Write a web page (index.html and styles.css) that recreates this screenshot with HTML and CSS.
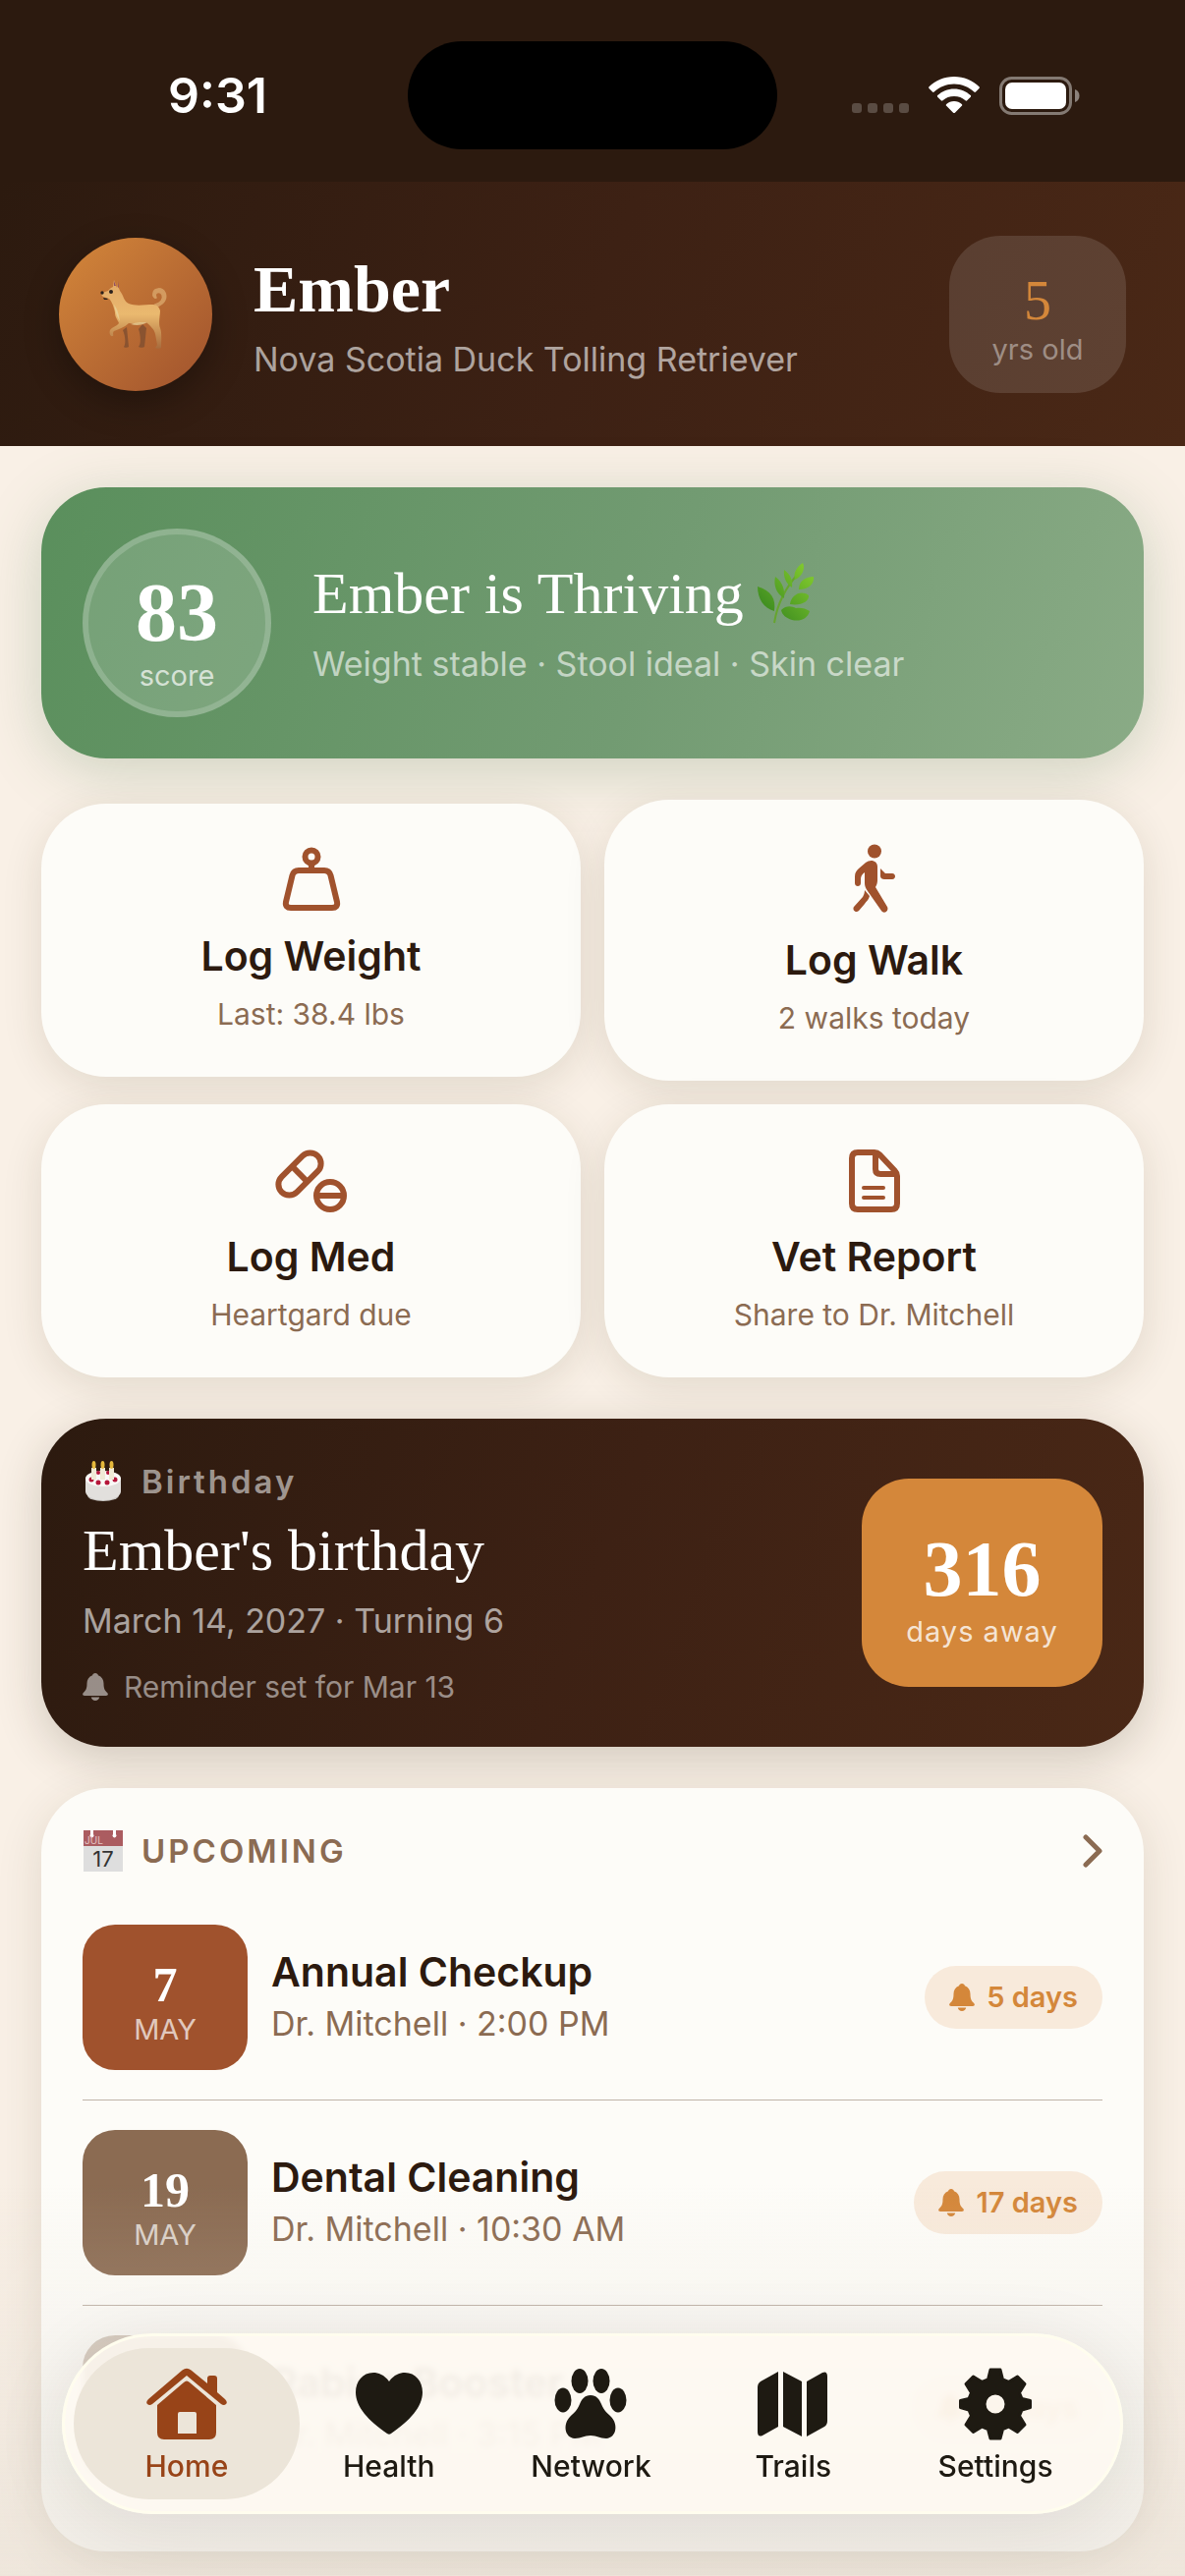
FILE: index.html
```html
<!DOCTYPE html>
<html lang="en">
<head>
<meta charset="utf-8">
<meta name="viewport" content="width=device-width, initial-scale=1">
<title>Ember</title>
<link rel="stylesheet" href="styles.css">
</head>
<body>
<svg class="defs" aria-hidden="true">
  <symbol id="bell" viewBox="0 0 26 28"><path d="M13 0c1.700 0 2.600 1 2.900 2.200 3.700 1.300 5.600 4.500 5.600 8.300 0 5 1 7 3.500 9.300 1.600 1.600.9 3.200-1 3.200H2c-1.900 0-2.600-1.600-1-3.200 2.500-2.300 3.500-4.300 3.500-9.300 0-3.800 1.900-7 5.600-8.300C10.400 1 11.300 0 13 0zM8.800 24.600h8.400c-.5 2-2 3.400-4.200 3.400s-3.700-1.400-4.200-3.400z"/></symbol>
</svg>

<div class="status">
  <time class="status-time">9:31</time>
  <div class="island"></div>
  <div class="status-icons">
    <svg width="58" height="38" viewBox="0 0 58 38" fill="#fff" fill-opacity=".22"><rect y="27" width="10" height="10" rx="3"/><rect x="16" y="27" width="10" height="10" rx="3"/><rect x="32" y="27" width="10" height="10" rx="3"/><rect x="48" y="27" width="10" height="10" rx="3"/></svg>
    <svg class="wifi" width="52" height="38" viewBox="0 0 52 38" fill="#fff"><path d="M26 0C36 0 45 4 51.500 10.300c.5.500.5 1.200 0 1.700l-3.500 3.500c-.5.500-1.200.5-1.700 0C41 10.500 34 7.500 26 7.500S11 10.500 5.700 15.500c-.5.500-1.200.5-1.700 0L.5 12c-.5-.5-.5-1.200 0-1.700C7 4 16 0 26 0z"/><path d="M26 12.500c6.500 0 12.400 2.500 16.800 6.600.5.500.5 1.200 0 1.700l-3.600 3.500c-.5.500-1.200.5-1.700 0C34.500 21.500 30.500 20 26 20s-8.500 1.500-11.500 4.300c-.5.500-1.200.5-1.700 0l-3.600-3.500c-.5-.5-.5-1.200 0-1.700 4.400-4.100 10.300-6.600 16.800-6.600z"/><path d="M26 25c3 0 5.700 1.100 7.800 2.900.6.500.6 1.300 0 1.800l-6.900 7c-.5.500-1.300.5-1.800 0l-6.900-7c-.6-.5-.6-1.300 0-1.800C20.300 26.100 23 25 26 25z"/></svg>
    <svg width="82" height="39" viewBox="0 0 82 39"><rect x="1.500" y="1.500" width="71" height="36" rx="11" fill="none" stroke="#fff" stroke-opacity=".42" stroke-width="3"/><rect x="6" y="6" width="62" height="27" rx="7" fill="#fff"/><path d="M77 13c3 1 4.500 3.500 4.500 6.500S80 25 77 26z" fill="#fff" fill-opacity=".45"/></svg>
  </div>
</div>

<header class="profile">
  <div class="avatar">
    <svg width="72" height="72" viewBox="0 0 72 72">
      <defs><linearGradient id="fur" x1="0" y1="0" x2="0" y2="1"><stop offset="0" stop-color="#e2a968"/><stop offset=".5" stop-color="#eab96f"/><stop offset="1" stop-color="#a86b3c"/></linearGradient></defs>
      <path d="M27 49l2 20c-1 1-5 1-5 0 2-2 2-10-1-17zM43 46l4 4-2 19c-1 1-5 1-6 0 3-3 2-12 0-18z" fill="#8a5330"/>
      <path d="M58 28c8-3 10-9 8-14-3-6-11-5-12 0-1 4 2 6 3 5-3-6 4-7 6-3 2 5-2 8-7 10z" fill="#d39b60" stroke="#d39b60" stroke-width="1.500"/>
      <path d="M17 9L14 1l-1 7c-3 1-4 3-5 4l-6 2c-1 1-1 3 1 4l6 2c3 3 5 9 6 14 0 5 3 8 4 11-2 3-7 4-9 7-1 3 0 7 3 6 1-1-1-3 1-5 5-2 11-4 15-8 6 1 12 0 18-1 4 4 8 7 9 12l2 11c-1 2-2 2-2 3 1 1 5 1 6 0 0-5 1-15-1-20-2-5 0-13 0-18-1-3-3-6-7-6-8 0-18 2-25-1-5-2-5-8-9-13-1-3-2-4-3-5L18 1z" fill="url(#fur)"/>
      <path d="M14 7V2l2 5zM18 8V2l1 7z" fill="#935063"/><path d="M14 26c2 10 4 14 6 17-1-6-2-12-6-17zM31 46c6 2 12 1 17-2-5 0-11 0-17 2z" fill="#ead7a0" opacity=".7"/>
      <ellipse cx="11" cy="13" rx="2" ry="2" fill="#2b211c"/><circle cx="2" cy="14" r="1.700" fill="#2b211c"/><path d="M3 19l5 1-1 1H4z" fill="#2b211c"/>
    </svg>
  </div>
  <div class="profile-text">
    <h1>Ember</h1>
    <p class="detail">Nova Scotia Duck Tolling Retriever</p>
  </div>
  <div class="age"><span class="age-number">5</span><span class="caption">yrs old</span></div>
</header>

<main>
  <section class="hero">
    <div class="score"><span class="big-number">83</span><span class="caption">score</span></div>
    <div class="hero-text">
      <h2>Ember is Thriving
        <svg class="leaf" width="58" height="62" viewBox="0 0 58 62"><defs><linearGradient id="lf" x1="1" y1="0" x2="0" y2="1"><stop offset="0" stop-color="#89d12f"/><stop offset="1" stop-color="#2f7f1d"/></linearGradient></defs><path d="M17 61C20 42 27 26 43 9" fill="none" stroke="#66a52e" stroke-width="2"/><g fill="url(#lf)"><path d="M46 0c3 6-1 14-8 17-2-7 2-13 8-17zM27 7c7 5 9 11 8 18-6-4-9-11-8-18zM18 14c8 6 10 14 9 22-8-5-11-13-9-22zM0 24c14 4 19 13 17 25C6 46 0 36 0 24zM57 14c1 7-5 13-15 13 0-8 6-13 15-13zM52 33c1 6-8 11-19 9 1-9 11-15 19-9zM53 49c-2 8-10 11-18 9-6-2-10-5-11-10 5-5 11-4 15-2 4-1 10 0 14 3z"/></g></svg>
      </h2>
      <p class="detail">Weight stable · Stool ideal · Skin clear</p>
    </div>
  </section>

  <div class="actions">
    <button class="action" type="button">
      <svg class="action-icon" width="76" height="76" viewBox="0 0 76 76" fill="none" stroke="#a0522d" stroke-width="6"><circle cx="38" cy="14" r="6.500"/><path d="M38 20v8M25 28h26q5 0 6.500 5l6.500 27q1 6-5 6H17q-6 0-5-6l6.500-27q1.500-5 6.500-5z" stroke-linejoin="round"/></svg>
      <span class="action-title">Log Weight</span><span class="action-note">Last: 38.4 lbs</span>
    </button>
    <button class="action" type="button">
      <svg class="action-icon" width="84" height="84" viewBox="0 0 84 84" fill="#a0522d"><circle cx="42" cy="12.500" r="7"/><path d="M33 24c5-4 12-2 12 4v14c0 3-1 5-2 7l12 20c2 4-3 8-6 4L35 53c-2-3-3-5-3-8V34c-3 2-4 4-4 7v4c0 4-6 4-6 0v-7c0-4 2-6 4-8zM48 30l5 5h7c4 0 4 6 0 6h-8c-2 0-4-1-4-3zM32 52l5 6c-1 4-3 5-5 8l-6 7c-3 3-7-1-5-4l9-10c1-2 2-4 2-7z"/></svg>
      <span class="action-title">Log Walk</span><span class="action-note">2 walks today</span>
    </button>
    <button class="action" type="button">
      <svg class="action-icon" width="76" height="76" viewBox="0 0 76 76" fill="none" stroke="#a0522d" stroke-width="6"><g transform="rotate(45 26 31)"><rect x="15" y="5" width="22" height="52" rx="11"/><path d="M15 31h22"/></g><circle cx="57" cy="53" r="14"/><path d="M43 53h28"/></svg>
      <span class="action-title">Log Med</span><span class="action-note">Heartgard due</span>
    </button>
    <button class="action" type="button">
      <svg class="action-icon" width="76" height="76" viewBox="0 0 76 76" fill="none" stroke="#a0522d" stroke-width="6" stroke-linejoin="round"><path d="M21 9h17q3 0 5 2l16 17q2 2 2 5v28q0 6-6 6H21q-6 0-6-6V15q0-6 6-6zM39 10v16q0 5 5 5h16"/><path d="M27 45h20M27 55h20" stroke-width="4" stroke-linecap="round"/></svg>
      <span class="action-title">Vet Report</span><span class="action-note">Share to Dr. Mitchell</span>
    </button>
  </div>

  <section class="birthday">
    <div class="birthday-text">
      <p class="eyebrow">
        <svg class="emoji" width="42" height="42" viewBox="0 0 42 42"><ellipse cx="21" cy="35" rx="16" ry="6" fill="#c9c7c4"/><path d="M3 17h36v14c0 5-8 9-18 9S3 36 3 31z" fill="#e2e0dd"/><ellipse cx="21" cy="18" rx="18" ry="8" fill="#faf9f7"/><g fill="#b5163a"><circle cx="9" cy="19" r="2.500"/><circle cx="16" cy="22" r="2.500"/><circle cx="25" cy="22" r="2.500"/><circle cx="33" cy="19" r="2.500"/><circle cx="16" cy="12" r="2"/><circle cx="26" cy="12" r="2"/></g><g fill="#f0ead6"><rect x="9" y="7" width="5" height="12"/><rect x="18" y="7" width="5" height="12"/><rect x="27" y="7" width="5" height="12"/></g><g fill="#e6b93c"><ellipse cx="11.500" cy="4" rx="2" ry="4"/><ellipse cx="20.500" cy="4" rx="2" ry="4"/><ellipse cx="29.500" cy="4" rx="2" ry="4"/></g></svg>
        Birthday</p>
      <h2>Ember's birthday</h2>
      <p class="detail">March 14, 2027 · Turning 6</p>
      <p class="reminder"><svg class="bell" width="26" height="28"><use href="#bell"/></svg>Reminder set for Mar 13</p>
    </div>
    <div class="countdown"><span class="big-number">316</span><span class="caption">days away</span></div>
  </section>

  <section class="upcoming">
    <a class="upcoming-head" href="#upcoming">
      <svg class="emoji" width="42" height="42" viewBox="0 0 42 42"><path d="M1 0h40v42H1z" fill="#dedede"/><path d="M1 0h40v16H1z" fill="#ab5c60"/><path d="M8 0h3v4a2 2 0 1 1-3 0zM31 0h3v4a2 2 0 1 1-3 0z" fill="#fff"/><text x="2" y="14" class="cal-month">JUL</text><text x="21" y="37" text-anchor="middle" class="cal-day">17</text></svg>
      <h3>UPCOMING</h3>
      <svg class="chevron" width="20" height="34" viewBox="0 0 20 34" fill="none" stroke="#8b6b52" stroke-width="5" stroke-linecap="round" stroke-linejoin="round"><path d="M3 3l14 14L3 31"/></svg>
    </a>
    <ul class="events" id="upcoming">
      <li class="event">
        <div class="date rust"><span class="day">7</span><span class="caption">MAY</span></div>
        <div class="event-text"><h4>Annual Checkup</h4><p>Dr. Mitchell · 2:00 PM</p></div>
        <span class="pill"><svg class="bell" width="26" height="28"><use href="#bell"/></svg>5 days</span>
      </li>
      <li class="event">
        <div class="date"><span class="day">19</span><span class="caption">MAY</span></div>
        <div class="event-text"><h4>Dental Cleaning</h4><p>Dr. Mitchell · 10:30 AM</p></div>
        <span class="pill"><svg class="bell" width="26" height="28"><use href="#bell"/></svg>17 days</span>
      </li>
      <li class="event faded">
        <div class="date"><span class="day">21</span><span class="caption">MAY</span></div>
        <div class="event-text"><h4>Rabies Booster</h4><p>Dr. Mitchell · 3:15 PM</p></div>
        <span class="pill"><svg class="bell" width="26" height="28"><use href="#bell"/></svg>19 days</span>
      </li>
    </ul>
  </section>
</main>

<div class="scrim"></div>
<nav class="tabs">
  <a class="tab active" href="#home"><svg width="82" height="74" viewBox="0 0 82 74" fill="currentColor"><path d="M36.500 2.500q4.500-3.500 9 0L62 16v-5q0-3 3-3h4q3 0 3 3v14l8 7q3 3 1 5-2 2-5 0L41 8 6 37q-3 2-5 0-2-2 1-5z"/><path d="M38 15q3-3 6 0l27 23v28q0 7-7 7H18q-7 0-7-7V38zM34 45q-2 0-2 2v20h19V47q0-2-2-2z" fill-rule="evenodd"/></svg>Home</a>
  <a class="tab" href="#health"><svg width="82" height="74" viewBox="0 0 82 74" fill="currentColor"><path d="M41 14C46 7 52 5 57 5c11 0 18 9 18 20 0 15-13 29-32 42q-2 1.500-4 0C20 54 7 40 7 25 7 14 14 5 25 5c5 0 11 2 16 9z"/></svg>Health</a>
  <a class="tab" href="#network"><svg width="82" height="74" viewBox="0 0 82 74" fill="currentColor"><ellipse cx="30" cy="13.500" rx="8.500" ry="12.500"/><ellipse cx="52" cy="13.500" rx="8.500" ry="12.500"/><ellipse cx="13" cy="33" rx="8.500" ry="12.500"/><ellipse cx="69" cy="33" rx="8.500" ry="12.500"/><path d="M41 28c6 0 9 4 11 9 3 7 6 9 10 13 7 7 6 21-5 22-7 0-9-3-16-3s-9 3-16 3c-11-1-12-15-5-22 4-4 7-6 10-13 2-5 5-9 11-9z"/></svg>Network</a>
  <a class="tab" href="#trails"><svg width="82" height="74" viewBox="0 0 82 74" fill="currentColor"><path d="M26 4v56L10 69q-5 2-5-4V20q0-4 3-6zM31 4l19 10v56L31 60zM55 14L71 5q5-2 5 4v45q0 4-3 6L55 70z"/></svg>Trails</a>
  <a class="tab" href="#settings"><svg width="82" height="74" viewBox="0 0 82 74" fill="currentColor"><path fill-rule="evenodd" stroke="currentColor" stroke-width="3" stroke-linejoin="round" d="M36 2h10l2.500 10 6 2.500L63.500 9l7.500 7.500-5.500 9L68 31.500l8.500 2v7L68 43l-2.500 6 5.500 9-7.500 7.500-9-5.500-6 2.500L46 72H36l-2.500-9.500-6-2.500-9 5.500L11 58l5.500-9-2.500-6-8.500-2.500v-7l8.500-2 2.500-6-5.500-9L18.500 9l9 5.500 6-2.500zM41 26a11 11 0 1 0 0 22 11 11 0 1 0 0-22z"/></svg>Settings</a>
</nav>
</body>
</html>
```
FILE: styles.css
```css
* { box-sizing: border-box; }

body {
  margin: 0;
  background: #f9f0e6;
  color: #2c1a0f;
  font-family: Inter, "Liberation Sans", sans-serif;
}

h1, h2, h3, h4, p, ul { margin: 0; padding: 0; }
ul { list-style: none; }
svg { display: block; flex: none; }
.defs { display: none; }

/* Status bar */
.status {
  display: grid;
  grid-template-columns: 1fr 376px 1fr;
  align-items: center;
  height: 185px;
  padding-top: 9px;
  background: #2c1a0f;
  color: #fff;
}
.status-time {
  padding-left: 28px;
  text-align: center;
  font-size: 50px;
  font-weight: 600;
  line-height: 60px;
}
.island {
  height: 110px;
  border-radius: 55px;
  background: #000;
}
.status-icons {
  display: flex;
  justify-content: center;
  gap: 20px;
  padding-right: 32px;
}

/* Profile header */
.profile {
  display: flex;
  align-items: center;
  gap: 42px;
  min-height: 269px;
  padding: 54px 60px;
  background: linear-gradient(110deg, #2c1a0f, #3d2114 50%, #4a2816);
  color: #fff;
}
.avatar {
  display: grid;
  place-items: center;
  width: 156px;
  height: 156px;
  border-radius: 50%;
  background: linear-gradient(135deg, #d4873a, #a0522d);
  box-shadow: 0 12px 36px rgba(0, 0, 0, .3);
}
.profile-text { flex: 1; }
h1, h2, .big-number, .age-number, .day {
  font-family: "Liberation Serif", serif;
}
h1 {
  font-size: 68px;
  line-height: 88px;
}
h2 {
  font-size: 60px;
  font-weight: 400;
  line-height: 72px;
  color: #fff;
}
.detail {
  font-size: 34px;
  line-height: 48px;
  color: rgba(255, 255, 255, .6);
}
.profile .detail { margin-top: 4px; }
.caption {
  font-size: 29px;
  line-height: 36px;
  color: rgba(255, 255, 255, .7);
}
.age {
  display: flex;
  flex-direction: column;
  align-items: center;
  justify-content: center;
  width: 180px;
  height: 160px;
  padding-top: 8px;
  border-radius: 52px;
  background: rgba(255, 255, 255, .12);
}
.age .caption { color: rgba(255, 255, 255, .42); }
.age-number {
  font-size: 56px;
  line-height: 64px;
  color: #d4873a;
}

/* Cards */
main {
  display: flex;
  flex-direction: column;
  gap: 42px;
  padding: 42px 42px 24px;
}
.hero, .birthday, .upcoming, .action {
  border-radius: 66px;
}
.hero {
  display: flex;
  align-items: center;
  gap: 42px;
  padding: 42px;
  background: linear-gradient(110deg, #5a8f5c, #729b72 55%, #8aab86);
  box-shadow: 0 12px 60px rgba(90, 130, 90, .28);
}
.score {
  display: flex;
  flex-direction: column;
  align-items: center;
  justify-content: center;
  width: 192px;
  height: 192px;
  padding-top: 16px;
  border: 6px solid rgba(255, 255, 255, .3);
  border-radius: 50%;
  background: rgba(255, 255, 255, .16);
  background-clip: padding-box;
}
.big-number {
  font-size: 84px;
  font-weight: 700;
  line-height: 92px;
  color: #fff;
}
.hero h2 {
  display: flex;
  align-items: center;
  gap: 14px;
}
.hero .detail { margin-top: 12px; }

.actions {
  display: grid;
  grid-template-columns: 1fr 1fr;
  align-items: center;
  gap: 24px;
}
.action {
  display: flex;
  flex-direction: column;
  align-items: center;
  gap: 12px;
  padding: 40px 24px 44px;
  border: 0;
  background: #fdfcf8;
  box-shadow: 0 10px 42px rgba(60, 50, 20, .12);
  color: #2c1a0f;
  font-family: inherit;
}
.action-title {
  font-size: 41px;
  font-weight: 600;
  line-height: 54px;
}
.action-note {
  font-size: 30px;
  line-height: 40px;
  color: #8b6b52;
}

.birthday {
  display: flex;
  align-items: center;
  justify-content: space-between;
  padding: 42px;
  background: linear-gradient(110deg, #2c1a0f, #3d2114 50%, #4a2816);
  box-shadow: 0 12px 48px rgba(50, 40, 20, .2);
}
.eyebrow {
  display: flex;
  align-items: center;
  gap: 18px;
  font-size: 33px;
  font-weight: 600;
  line-height: 44px;
  letter-spacing: 3px;
  color: rgba(255, 255, 255, .55);
}
.birthday h2 { margin: 12px 0; }
.reminder {
  display: flex;
  align-items: center;
  gap: 16px;
  margin-top: 24px;
  font-size: 30px;
  line-height: 38px;
  color: rgba(255, 255, 255, .5);
}
.bell { fill: currentColor; }
.countdown {
  display: flex;
  flex-direction: column;
  align-items: center;
  justify-content: center;
  width: 245px;
  height: 212px;
  padding-top: 8px;
  border-radius: 48px;
  background: #d4873a;
}
.countdown .big-number { font-size: 80px; }
.countdown .caption { letter-spacing: 1px; color: rgba(255, 255, 255, .8); }

/* Upcoming events */
.upcoming {
  padding: 42px;
  background: #fdfcf8;
  box-shadow: 0 12px 48px rgba(60, 50, 20, .12);
}
.upcoming-head {
  display: flex;
  align-items: center;
  gap: 18px;
  height: 43px;
  margin-bottom: 24px;
  color: #8b6b52;
  text-decoration: none;
}
.upcoming-head h3 {
  flex: 1;
  font-size: 33px;
  font-weight: 600;
  letter-spacing: 3px;
}
.cal-month { font: 10px Inter, sans-serif; fill: #e5c4c4; }
.cal-day { font: 22px Inter, sans-serif; fill: #333; }
.event {
  display: flex;
  align-items: center;
  gap: 24px;
  padding: 30px 0;
}
.event + .event { border-top: 1px solid #bfb3a8; }
.date {
  display: flex;
  flex-direction: column;
  align-items: center;
  justify-content: center;
  width: 168px;
  height: 148px;
  padding-top: 10px;
  border-radius: 33px;
  background: #8b6b52;
}
.date.rust { background: #a0522d; }
.day {
  font-size: 50px;
  font-weight: 700;
  line-height: 56px;
  color: #fff;
}
.event-text { flex: 1; }
.event h4 {
  font-size: 41px;
  font-weight: 600;
  line-height: 54px;
}
.event p {
  font-size: 34px;
  line-height: 52px;
  color: #8b6b52;
}
.pill {
  display: flex;
  align-items: center;
  gap: 12px;
  padding: 0 25px;
  border-radius: 32px;
  background: #f8eadb;
  font-size: 29px;
  font-weight: 600;
  line-height: 64px;
  color: #d4873a;
}
.event.faded > * { opacity: .35; }

/* Tab bar */
.scrim {
  position: fixed;
  inset: auto 0 0;
  height: 400px;
  background: linear-gradient(rgba(225, 218, 207, 0), rgba(225, 218, 207, .45));
  pointer-events: none;
}
.tabs {
  position: fixed;
  inset: auto 63px 63px;
  display: flex;
  padding: 12px 24px 12px 21px;
  border: 3px solid #fffdee;
  border-radius: 93px;
  background: rgba(255, 250, 242, .8);
  box-shadow: 0 12px 72px rgba(44, 26, 15, .1);
  backdrop-filter: blur(3px);
}
.tab {
  position: relative;
  display: flex;
  flex: 1;
  flex-direction: column;
  align-items: center;
  gap: 8px;
  padding: 20px 0 16px;
  font-size: 30px;
  font-weight: 500;
  line-height: 36px;
  color: #1e1a12;
  text-decoration: none;
}
.tab.active { color: #984418; }
.tab.active::before {
  content: "";
  position: absolute;
  z-index: -1;
  inset: 0 -12px;
  border-radius: 81px;
  background: #ece5d9;
}
```
